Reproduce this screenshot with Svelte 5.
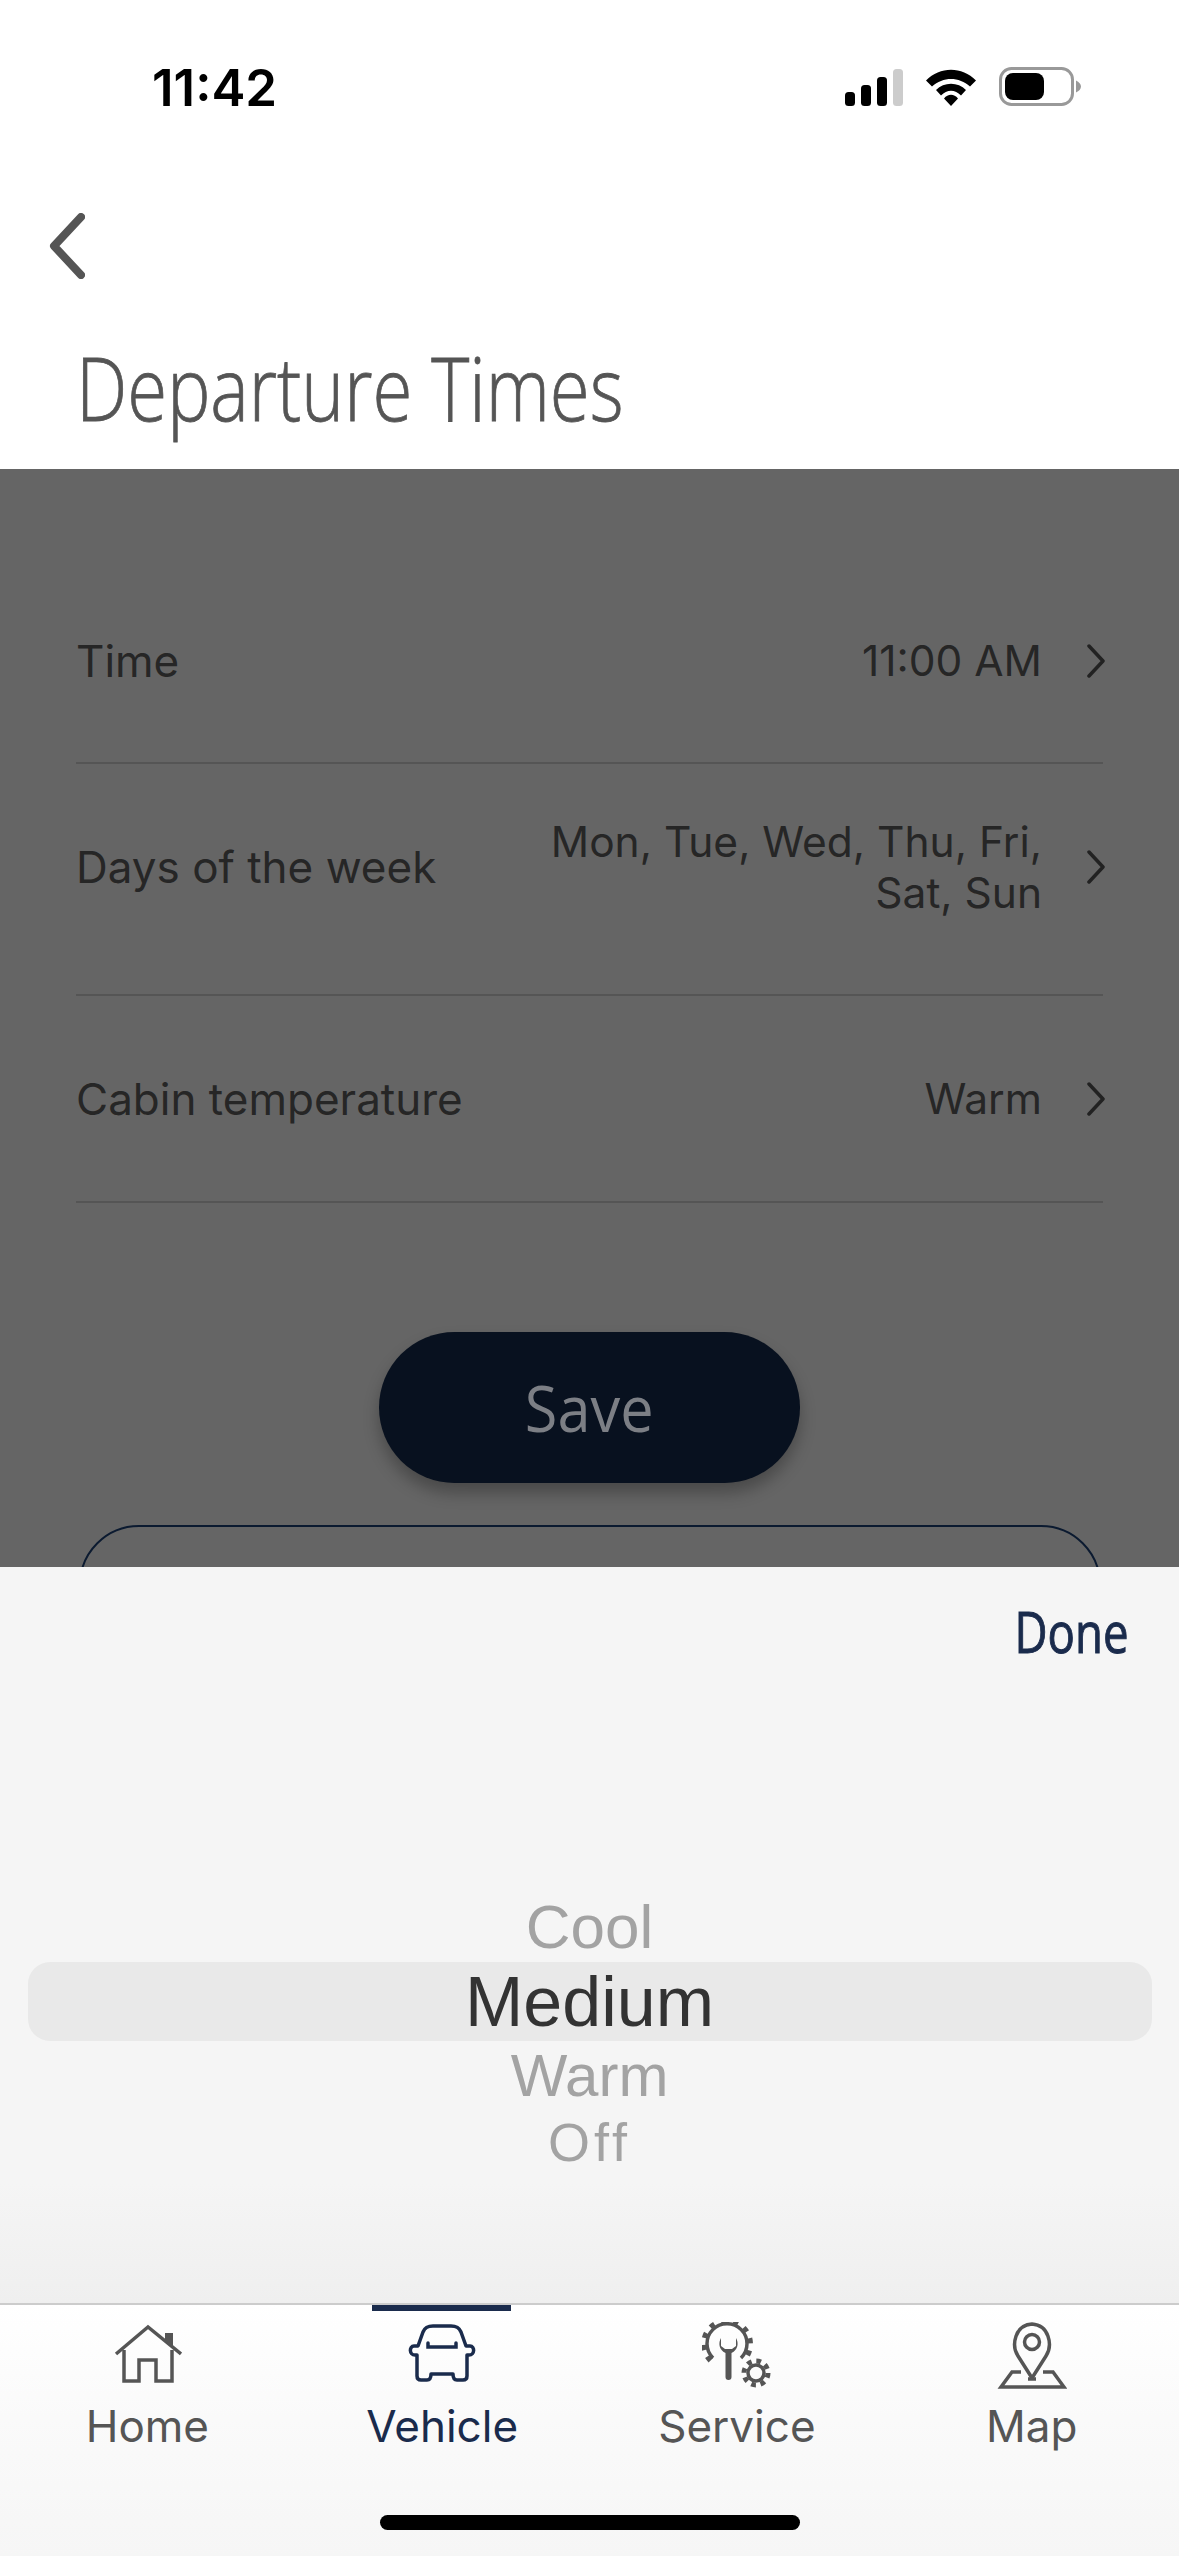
<script>
  const rows = [
    { label: 'Time', value: ['11:00 AM'], cls: 'first' },
    { label: 'Days of the week', value: ['Mon, Tue, Wed, Thu, Fri,', 'Sat, Sun'], cls: 'second' },
    { label: 'Cabin temperature', value: ['Warm'], cls: 'third' }
  ];
</script>

<div class="page">
  <header class="head">
    <div class="status">
      <span class="clock">11:42</span>
      <div class="status-icons">
        <svg width="58" height="38" viewBox="0 0 58 38"><rect x="0" y="23" width="10" height="14" rx="3.5" fill="#000"/><rect x="16" y="16" width="10" height="21" rx="3.5" fill="#000"/><rect x="32" y="8" width="10" height="29" rx="3.5" fill="#000"/><rect x="48" y="0" width="10" height="37" rx="3.5" fill="#ccc"/></svg>
        <svg width="50" height="38" viewBox="0 0 50 38"><path d="M0 11.5C14-3 36-3 50 11.5L44 17.5C33 7.500 17 7.500 6 17.500Z M10 21C18 12.500 32 12.500 40 21L35 26.500C29 20 21 20 15 26.500Z M18 29.500C22 24.500 28 24.500 32 29.500L25 37Z" fill="#000"/></svg>
        <svg width="82" height="40" viewBox="0 0 82 40"><rect x="1.500" y="1.500" width="72" height="36" rx="11" fill="none" stroke="#999" stroke-width="3"/><rect x="6" y="6" width="39" height="27" rx="8" fill="#000"/><path d="M77 13.500C80 15 82 17 82 19.500C82 22 80 24 77 25.500Z" fill="#999"/></svg>
      </div>
    </div>
    <div class="back">
      <svg width="36" height="66" viewBox="0 0 36 66"><path d="M32 4 5 33 32 62" fill="none" stroke="#555" stroke-width="8" stroke-linecap="round" stroke-linejoin="round"/></svg>
    </div>
    <h1><span>Departure Times</span></h1>
  </header>

  <main class="form">
    {#each rows as row}
      <div class="row {row.cls}">
        <span class="label">{row.label}</span>
        <span class="value">
          {#each row.value as line}<span>{line}</span>{/each}
        </span>
        <svg class="chev" width="20" height="34" viewBox="0 0 20 34"><path d="M3 2 17 17 3 32" fill="none" stroke="#222" stroke-width="3.500" stroke-linecap="round" stroke-linejoin="round"/></svg>
      </div>
    {/each}
    <div class="save"><span>Save</span></div>
    <div class="outline"></div>
  </main>

  <section class="sheet">
    <div class="done-bar"><span class="done">Done</span></div>
    <div class="picker">
      <div class="opt cool">Cool</div>
      <div class="selected"><span>Medium</span></div>
      <div class="opt warm">Warm</div>
      <div class="opt off">Off</div>
    </div>
    <div class="fade"></div>
  </section>

  <nav class="tabs">
    <div class="tab">
      <svg class="ic" width="70" height="68" viewBox="0 0 70 68"><path d="M4 32 36 5 69 32" fill="none" stroke="#555" stroke-width="3.500"/><path d="M53 11H61V26L53 19Z" fill="#555"/><path d="M12 28V59H27V38H44V59H60V28" fill="none" stroke="#555" stroke-width="3.500"/></svg>
      <span>Home</span>
    </div>
    <div class="tab active">
      <i class="bar"></i>
      <svg class="ic" width="70" height="68" viewBox="0 0 70 68"><path d="M7 24H11L16 10C18 5 21 4 26 4H44C49 4 52 5 54 10L59 24H63C68 24 68 33 62 33H60V54C60 57 58 58 56 58H50C47 58 46 56 46 52H24C24 56 23 58 20 58H14C12 58 10 57 10 54V33H8C2 33 2 24 7 24Z" fill="none" stroke="#1a2b4c" stroke-width="3.500" stroke-linejoin="round"/><path d="M21 21V25H49V21" fill="none" stroke="#1a2b4c" stroke-width="3.500" stroke-linecap="round"/></svg>
      <span>Vehicle</span>
    </div>
    <div class="tab">
      <svg class="ic" width="70" height="68" viewBox="0 0 70 68">
        <g fill="none" stroke="#555">
          <path d="M11 36A20 20 0 1 1 39 36" stroke-width="3.500"/>
          <path d="M8.700 38.300A23 23 0 1 1 41.300 38.300" stroke-width="6" stroke-dasharray="5 7"/>
          <circle cx="54" cy="51" r="8" stroke-width="3.500"/>
          <circle cx="54" cy="51" r="12" stroke-width="5" stroke-dasharray="4.700 4.720"/>
        </g>
        <path d="M19 16C16 21 17 28 23.500 31V55A3 3 0 0 0 29.500 55V31C36 28 37 21 34 16V24L30 27H23L19 24Z" fill="#555"/>
      </svg>
      <span>Service</span>
    </div>
    <div class="tab">
      <svg class="ic" width="70" height="68" viewBox="0 0 70 68"><path d="M35 56 21 34C14 23 18 3 35 2 52 3 56 23 49 34Z" fill="none" stroke="#555" stroke-width="3.500" stroke-linejoin="round"/><circle cx="35" cy="20" r="7.500" fill="none" stroke="#555" stroke-width="3.500"/><path d="M24 50H15L4 65H67L56 50H46" fill="none" stroke="#555" stroke-width="3.500"/><path d="M31 57H39" stroke="#555" stroke-width="3.500"/></svg>
      <span>Map</span>
    </div>
    <div class="home-bar"></div>
  </nav>
</div>

<style>
  :global(body) { margin: 0; background: #fff; }
  .page { width: 1179px; height: 2556px; display: flex; flex-direction: column; overflow: hidden; font-family: Inter, "Noto Sans", sans-serif; }

  .head { height: 469px; background: #fff; display: flex; flex-direction: column; flex: none; }
  .status { height: 107px; display: flex; justify-content: space-between; align-items: flex-end; padding: 0 98px 0 152px; flex: none; }
  .clock { font: 600 51px/47px Inter, sans-serif; color: #000; margin-bottom: -4px; }
  .status-icons { display: flex; gap: 23px; align-items: flex-end; }
  .back { margin: 106px 0 0 49px; height: 66px; }
  .back svg { display: block; }
  h1 { margin: 0; padding: 58px 0 0 76px; font: 300 88px/100px "Open Sans", sans-serif; color: #555; white-space: nowrap; -webkit-text-stroke: 0.8px #555; }
  h1 span { display: inline-block; transform: scaleX(.825); transform-origin: left center; }

  .form { height: 1098px; background: #656565; flex: none; overflow: hidden; display: flex; flex-direction: column; align-items: center; padding: 0 76px; box-sizing: border-box; }
  .row { width: 100%; flex: none; display: flex; align-items: center; border-bottom: 2px solid #555; box-sizing: border-box; color: #262626; font-size: 44px; }
  .row.first { height: 295px; padding-top: 90px; }
  .row.second { height: 232px; padding-bottom: 24px; }
  .row.third { height: 207px; }
  .label { flex: none; }
  .value { margin-left: auto; text-align: right; display: flex; flex-direction: column; font-size: 42.5px; line-height: 51px; }
  .chev { margin: 0 0 0 41px; flex: none; transform: translateX(3px); }
  .save { margin-top: 129px; width: 421px; height: 151px; flex: none; border-radius: 76px; background: #08111f; box-shadow: 0 10px 16px rgba(0,0,0,.28); display: flex; align-items: center; justify-content: center; }
  .save span { font: 400 64px/1 "Open Sans", sans-serif; color: #7c7f85; display: inline-block; transform: scaleX(.93); }
  .outline { margin-top: 42px; width: 1022px; height: 120px; flex: none; box-sizing: border-box; border: 2px solid #0b1a30; border-radius: 76px; }

  .sheet { height: 736px; background: #f5f5f5; flex: none; display: flex; flex-direction: column; position: relative; }
  .done-bar { display: flex; justify-content: flex-end; padding: 30px 50px 0 0; height: 100px; box-sizing: border-box; flex: none; }
  .done { font: 400 57px/1.2 "Open Sans", sans-serif; color: #1a2b4c; -webkit-text-stroke: 1px #1a2b4c; display: inline-block; transform: scaleX(.8); transform-origin: right center; }
  .picker { margin-top: 230px; display: flex; flex-direction: column; align-items: center; font-family: "Liberation Sans", sans-serif; }
  .opt { color: #a3a3a3; font-size: 62px; line-height: 60px; }
  .selected { width: 1124px; height: 79px; background: #e9e9e9; border-radius: 22px; display: flex; align-items: center; justify-content: center; color: #333; font-size: 70px; margin-top: 5px; }
  .warm { margin-top: 5px; font-size: 60px; }
  .off { margin-top: 9px; font-size: 54px; line-height: 54px; letter-spacing: 4px; }
  .fade { position: absolute; left: 0; right: 0; bottom: 0; height: 120px; background: linear-gradient(#f5f5f5, #efefef); }

  .tabs { flex: 1; position: relative; display: grid; grid-template-columns: repeat(4, 1fr); border-top: 2px solid #ccc; background: linear-gradient(#fff, #fafafa 45%, #f6f6f6); box-sizing: border-box; }
  .tab { display: flex; flex-direction: column; align-items: center; position: relative; color: #555; font-size: 44px; line-height: 54px; }
  .tab .ic { position: absolute; top: 17px; left: 50%; margin-left: -35px; }
  .tab span { margin-top: 94px; }
  .tab.active { color: #1a2b4c; }
  .bar { position: absolute; top: 0; left: 77px; width: 139px; height: 6px; background: #1a2b4c; }
  .home-bar { position: absolute; left: 380px; top: 210px; width: 420px; height: 15px; background: #000; border-radius: 8px; }
</style>
